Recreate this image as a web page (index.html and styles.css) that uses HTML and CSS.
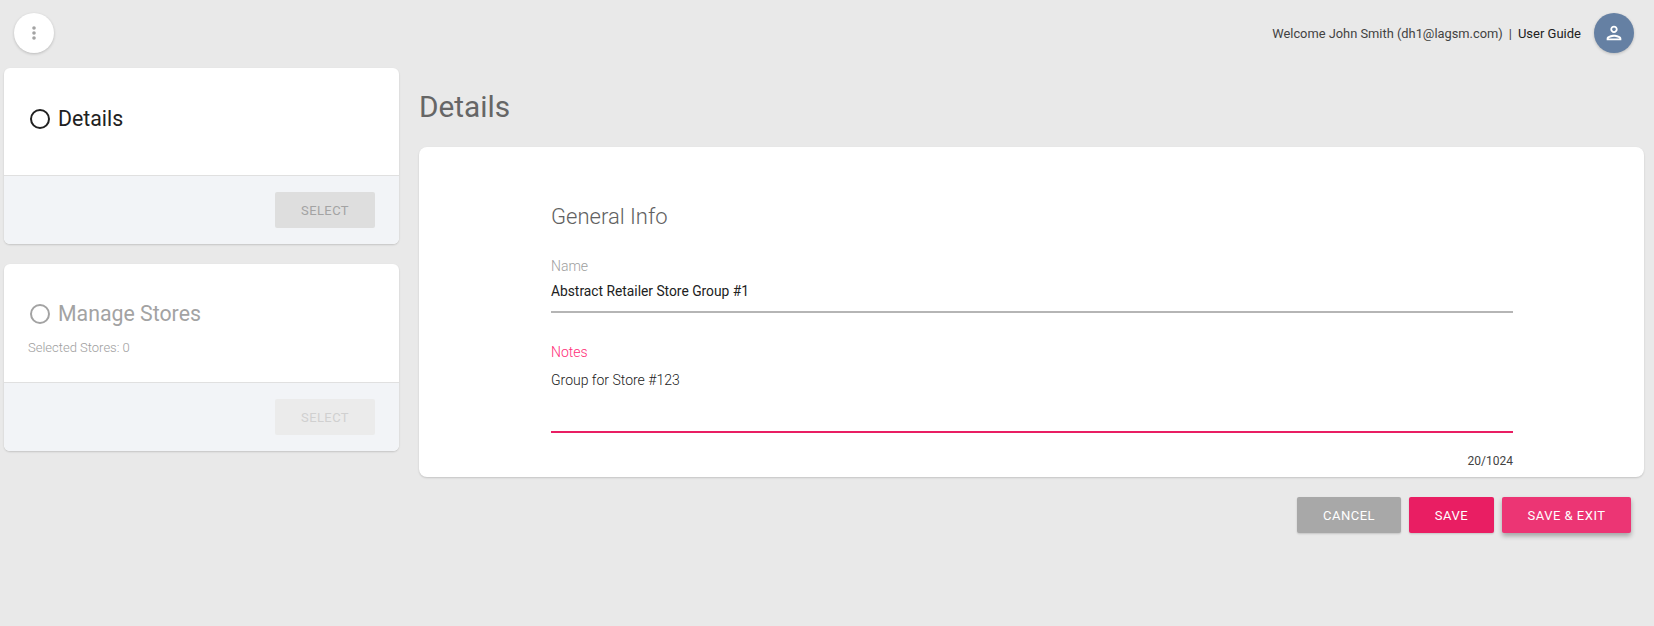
FILE: index.html
```html
<!DOCTYPE html>
<html lang="en">

<head>
    <meta charset="UTF-8">
    <title>Details</title>
    <link rel="stylesheet" href="styles.css">
</head>

<body>

    <!-- Top bar -->
    <header class="topbar">
        <button class="round-btn menu-btn" aria-label="Menu">
            <svg width="24" height="24" viewBox="0 0 24 24" fill="#a3a3a3">
                <circle cx="12" cy="7" r="1.8"></circle>
                <circle cx="12" cy="12" r="1.8"></circle>
                <circle cx="12" cy="17" r="1.8"></circle>
            </svg>
        </button>
        <div class="user-area">
            <span class="welcome">Welcome John Smith (dh1@lagsm.com)</span>
            <span class="sep">|</span>
            <span class="guide">User Guide</span>
            <button class="round-btn avatar-btn" aria-label="User">
                <svg width="22" height="22" viewBox="0 0 24 24" fill="#fff">
                    <path d="M12 6c1.1 0 2 .9 2 2s-.9 2-2 2-2-.9-2-2 .9-2 2-2m0 10c2.7 0 5.8 1.29 6 2H6c.23-.72 3.31-2 6-2M12 4C9.79 4 8 5.79 8 8s1.79 4 4 4 4-1.79 4-4-1.79-4-4-4zm0 10c-2.67 0-8 1.34-8 4v2h16v-2c0-2.66-5.33-4-8-4z"></path>
                </svg>
            </button>
        </div>
    </header>

    <div class="page">

        <!-- Steps -->
        <aside class="steps">
            <section class="step-card">
                <div class="step-body step-body-first">
                    <h2 class="step-title"><span class="step-circle"></span>Details</h2>
                </div>
                <div class="step-foot">
                    <button class="select-btn">SELECT</button>
                </div>
            </section>

            <section class="step-card step-disabled">
                <div class="step-body">
                    <h2 class="step-title"><span class="step-circle"></span>Manage Stores</h2>
                    <p class="step-note">Selected Stores: 0</p>
                </div>
                <div class="step-foot">
                    <button class="select-btn">SELECT</button>
                </div>
            </section>
        </aside>

        <!-- Main form -->
        <main class="content">
            <h1 class="page-title">Details</h1>

            <div class="form-card">
                <h3 class="form-title">General Info</h3>

                <div class="field">
                    <label class="field-label">Name</label>
                    <div class="field-value">Abstract Retailer Store Group #1</div>
                </div>

                <div class="field field-focus">
                    <label class="field-label">Notes</label>
                    <div class="field-value field-area">Group for Store #123</div>
                </div>

                <div class="counter">20/1024</div>
            </div>

            <div class="actions">
                <button class="btn btn-cancel">CANCEL</button>
                <button class="btn btn-save">SAVE</button>
                <button class="btn btn-exit">SAVE &amp; EXIT</button>
            </div>
        </main>
    </div>

</body>

</html>
```

FILE: styles.css
```css
body {
    margin: 0;
    min-height: 626px;
    background: #e9e9e9;
    font-family: Roboto, "Liberation Sans", sans-serif;
    font-size: 12px;
    color: #212121;
    overflow: hidden;
}

h1, h2, h3, p {
    margin: 0;
    font-weight: 400;
}

button {
    border: 0;
    font-family: inherit;
}

/* Top bar */
.topbar {
    display: flex;
    justify-content: space-between;
    align-items: center;
    height: 40px;
    padding: 13px 20px 15px 14px;
}

.round-btn {
    display: flex;
    align-items: center;
    justify-content: center;
    width: 40px;
    height: 40px;
    padding: 0;
    border-radius: 50%;
    box-shadow: 0 1px 3px rgba(0, 0, 0, 0.2);
}

.menu-btn {
    background: #fff;
}

.avatar-btn {
    background: #6580a3;
    margin-left: 13px;
}

.user-area {
    display: flex;
    align-items: center;
    font-size: 12.85px;
    color: #424242;
}

.sep {
    margin: 0 6px;
}

.guide {
    color: #212121;
    font-size: 13px;
}

/* Layout */
.page {
    display: flex;
    align-items: flex-start;
    padding: 0 10px 0 4px;
}

.steps {
    width: 395px;
    flex-shrink: 0;
    margin-right: 20px;
}

.content {
    flex: 1;
}

/* Step cards */
.step-card {
    background: #fff;
    border-radius: 6px;
    margin-bottom: 20px;
    overflow: hidden;
    box-shadow: 0 1px 2px rgba(0, 0, 0, 0.16);
}

.step-body {
    height: 118px;
    box-sizing: border-box;
    padding: 38px 0 0 24px;
}

.step-body-first {
    height: 107px;
    padding-top: 39px;
}

.step-title {
    display: flex;
    align-items: center;
    font-size: 21.3px;
    line-height: 24px;
    color: #212121;
}

.step-circle {
    width: 20px;
    height: 20px;
    border: 2px solid #212121;
    border-radius: 50%;
    margin: 0 8px 0 2px;
    box-sizing: border-box;
}

.step-note {
    margin-top: 14px;
    font-size: 13px;
    font-weight: 300;
    color: #757575;
}

.step-foot {
    display: flex;
    justify-content: flex-end;
    height: 69px;
    box-sizing: border-box;
    padding: 16px 24px 0 0;
    background: #f2f4f7;
    border-top: 1px solid #e0e0e0;
}

.select-btn {
    width: 100px;
    height: 36px;
    background: #dedede;
    color: #a3a3a3;
    font-size: 13px;
    letter-spacing: 0.4px;
    border-radius: 2px;
}

.step-disabled .step-title {
    color: #a3a3a3;
}

.step-disabled .step-circle {
    border-color: #a3a3a3;
}

.step-disabled .step-note {
    color: #9e9e9e;
}

.step-disabled .select-btn {
    background: #ebebeb;
    color: #d0d0d0;
}

/* Main form */
.page-title {
    font-size: 29.8px;
    line-height: 36px;
    color: #666;
    margin: 21px 0 22px;
}

.form-card {
    height: 330px;
    box-sizing: border-box;
    padding: 56px 131px 0 132px;
    background: #fff;
    border-radius: 8px;
    box-shadow: 0 1px 2px rgba(0, 0, 0, 0.16);
}

.form-title {
    font-size: 22px;
    font-weight: 300;
    line-height: 28px;
    color: #616161;
    margin-bottom: 27px;
}

.field {
    border-bottom: 2px solid #b5b5b5;
    margin-bottom: 31px;
}

.field-label {
    display: block;
    font-size: 14px;
    font-weight: 300;
    line-height: 16px;
    color: #9e9e9e;
    margin-bottom: 8px;
}

.field-value {
    font-size: 13.8px;
    line-height: 18px;
    height: 29px;
    color: #212121;
}

.field-area {
    height: 60px;
    font-size: 14px;
    font-weight: 300;
}

.field-focus {
    border-bottom-color: #e91e63;
    margin-bottom: 21px;
}

.field-focus .field-label {
    color: #ff2d78;
    margin-bottom: 11px;
}

.counter {
    text-align: right;
    font-size: 12px;
    line-height: 14px;
    color: #424242;
}

/* Buttons */
.actions {
    display: flex;
    justify-content: flex-end;
    gap: 8px;
    margin: 20px 13px 0 0;
}

.btn {
    height: 36px;
    color: #fff;
    font-size: 13px;
    letter-spacing: 0.5px;
    border-radius: 2px;
    box-shadow: 0 1px 2px rgba(0, 0, 0, 0.16);
}

.btn-cancel {
    width: 104px;
    background: #a8a8a8;
}

.btn-save {
    width: 85px;
    background: #e91e63;
}

.btn-exit {
    width: 129px;
    background: #ec3574;
    box-shadow: 0 3px 5px rgba(0, 0, 0, 0.3);
}
```
